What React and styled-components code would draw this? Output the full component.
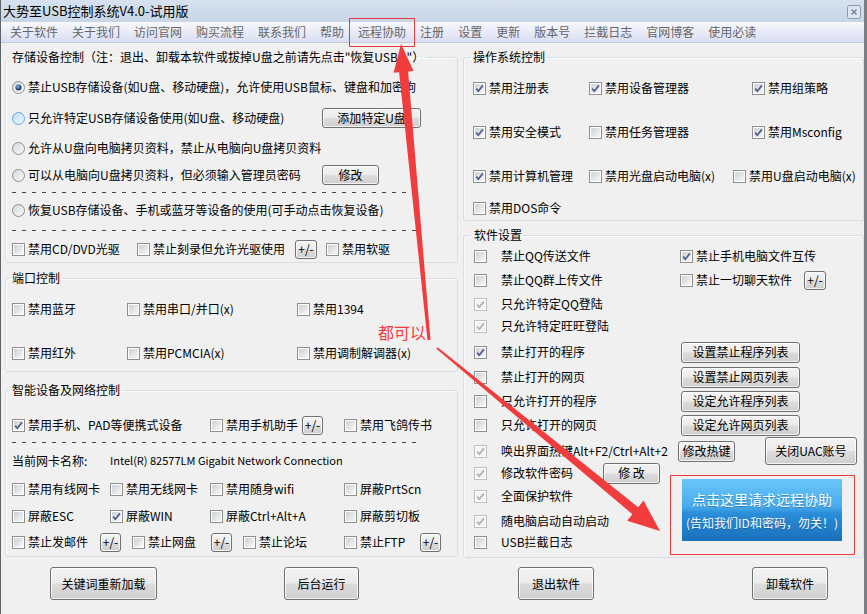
import React from "react";
import styled, { createGlobalStyle } from "styled-components";

// - - - - - - - - - - -
// page base
const GlobalStyle = createGlobalStyle`
  html, body {
    margin: 0;
    padding: 0;
    background: #f0f0f0;
  }
  body {
    font-family: "Noto Sans CJK SC", "Noto Sans", sans-serif;
    font-size: 12px;
    color: #000;
  }
  * {
    box-sizing: border-box;
  }
`;

// - - - - - - - - - - -
// window frame
const Window = styled.div`
  position: relative;
  width: 867px;
  height: 614px;
  display: flex;
  flex-direction: column;
  background: #f0f0f0;
  border-left: 1px solid #5f646b;
  border-right: 3px solid #7a7f86;
  overflow: hidden;
`;

const TitleBar = styled.div`
  display: flex;
  align-items: center;
  height: 22px;
  padding-left: 2px;
  background: linear-gradient(#d6e2ef, #c7d5e5);
  font-size: 13px;
  line-height: 22px;
`;

const CloseBox = styled.svg`
  display: block;
  align-self: flex-start;
  margin: 5px 3px 0 auto;
`;

const MenuBar = styled.div`
  display: flex;
  height: 21px;
  padding-left: 2px;
  background: linear-gradient(#f8f9fd, #d9def2);
  border-bottom: 1px solid #c6cad6;
`;

const MenuItem = styled.span`
  padding: 0 7px;
  line-height: 20px;
  font-size: 12px;
  color: #666;
`;

// - - - - - - - - - - -
// two columns of group boxes
const Main = styled.div`
  display: grid;
  grid-template-columns: 453px 401px;
  column-gap: 5px;
  padding: 6px 0 0 4px;
`;

const Column = styled.div`
  display: flex;
  flex-direction: column;
`;

const Group = styled.fieldset`
  min-width: 0;
  margin: ${(p) => p.$mt || 0}px 0 0 0;
  padding: 0 0 0 ${(p) => p.$pl || 6}px;
  border: 1px solid #d5dfe5;
  border-radius: 3px;
  box-shadow: inset 1px 1px 0 #fbfbfb;
`;

const Legend = styled.legend`
  margin-left: -2px;
  padding: 0 2px;
  font-size: 12px;
  line-height: 16px;
  white-space: nowrap;
`;

const Rows = styled.div`
  display: flex;
  flex-direction: column;
  gap: ${(p) => p.$gap || 0}px;
  padding: ${(p) => p.$pt || 0}px 0 ${(p) => p.$pb || 0}px 0;
`;

const Row = styled.div`
  display: grid;
  grid-template-columns: ${(p) => p.$cols || "auto"};
  align-items: center;
  height: ${(p) => p.$h}px;
`;

const DashLine = styled.div`
  width: 410px;
  height: 1px;
  background: repeating-linear-gradient(to right, #444 0 4px, transparent 4px 10px);
`;

const Opt = styled.label`
  display: inline-flex;
  align-items: center;
  gap: ${(p) => (p.$gap === undefined ? 3 : p.$gap)}px;
  white-space: nowrap;
  line-height: 16px;
`;

const Inline = styled.div`
  display: flex;
  align-items: center;
  gap: ${(p) => p.$gap || 0}px;
`;

const NicName = styled.span`
  font-size: 11px;
  white-space: nowrap;
`;

// - - - - - - - - - - -
// software settings grid
const SoftGrid = styled.div`
  display: grid;
  grid-template-columns: 129px 77px 85px 1fr;
  grid-template-rows: 26px 22px 26px 18px 34px 16px 32px 16px 36px 8px 38px 12px 30px;
  align-items: center;
`;

const Cell = styled.div`
  grid-row: ${(p) => p.$r};
  grid-column: ${(p) => p.$c};
  display: flex;
  align-items: center;
  margin-left: ${(p) => p.$ml || 0}px;
  gap: ${(p) => p.$gap || 0}px;
`;

// - - - - - - - - - - -
// buttons
const WinButton = styled.button`
  width: ${(p) => p.$w}px;
  height: ${(p) => p.$h || 21}px;
  margin-left: ${(p) => p.$ml || 0}px;
  padding: 0;
  font-family: inherit;
  font-size: 12px;
  line-height: 14px;
  color: #000;
  border: 1px solid #707070;
  border-radius: 3px;
  background: linear-gradient(#f3f3f3 0%, #ebebeb 48%, #dcdcdc 52%, #cfcfcf 100%);
  box-shadow: inset 0 0 0 1px rgba(255, 255, 255, 0.75);
  justify-self: start;
  white-space: nowrap;
  flex-shrink: 0;
`;

const BlueButton = styled.button`
  grid-row: 11 / span 3;
  grid-column: 3 / 5;
  align-self: start;
  margin: 2px 0 0 2px;
  width: 160px;
  height: 62px;
  display: flex;
  flex-direction: column;
  align-items: center;
  justify-content: center;
  gap: 6px;
  padding: 0;
  border: none;
  font-family: inherit;
  color: #fff;
  text-shadow: 0 1px 1px rgba(0, 40, 90, 0.35);
  background: linear-gradient(#6ac6f8 0%, #48abec 45%, #2a8ed9 55%, #1a70bb 100%);
`;

const BlueLine = styled.span`
  font-size: ${(p) => p.$size}px;
  line-height: ${(p) => p.$lh}px;
  white-space: nowrap;
`;

const BottomBar = styled.div`
  flex: 1;
  display: flex;
  align-items: flex-start;
  padding: 9px 0 0 49px;
`;

// - - - - - - - - - - -
// annotation layer drawn over the window
const Overlay = styled.svg`
  position: absolute;
  left: -1px;
  top: 0;
  pointer-events: none;
`;

const Note = styled.span`
  position: absolute;
  left: 377px;
  top: 323px;
  font-size: 16px;
  line-height: 18px;
  color: #f23c3c;
  white-space: nowrap;
`;

const Glyph = styled.svg`
  display: block;
  flex-shrink: 0;
`;

// - - - - - - - - - - -
// checkbox and radio drawings
const Check = ({ on, off }) => (
  <Glyph width="13" height="13" viewBox="0 0 13 13">
    <rect x="0.5" y="0.5" width="12" height="12" fill="#fff" stroke={off ? "#bdbdbd" : "#8e8f8f"} />
    <rect x="2" y="2" width="9" height="9" fill={off ? "#f3f3f3" : "url(#cbg)"} />
    {on && (
      <path
        d="M3.2 6.6 L5.3 9.2 L9.9 3.4"
        fill="none"
        stroke={off ? "#b2b2b2" : "#4a5d8e"}
        strokeWidth="1.7"
      />
    )}
  </Glyph>
);

const Radio = ({ on, hot }) => (
  <Glyph width="13" height="13" viewBox="0 0 13 13">
    <circle cx="6.5" cy="6.5" r="6" fill={hot ? "url(#rhot)" : "url(#rbg)"} stroke={hot ? "#6ea4d6" : "#8e8f8f"} />
    {on && <circle cx="6.5" cy="6.5" r="3" fill="url(#rdot)" />}
  </Glyph>
);

const CheckOpt = ({ on, off, gap, children }) => (
  <Opt $gap={gap}>
    <Check on={on} off={off} />
    <span>{children}</span>
  </Opt>
);

const RadioOpt = ({ on, hot, children }) => (
  <Opt>
    <Radio on={on} hot={hot} />
    <span>{children}</span>
  </Opt>
);

const menus = ["关于软件", "关于我们", "访问官网", "购买流程", "联系我们", "帮助", "远程协助", "注册", "设置", "更新", "版本号", "拦截日志", "官网博客", "使用必读"];

export default function App() {
  return (
    <>
      <GlobalStyle />
      <svg width="0" height="0" style={{ position: "absolute" }}>
        <defs>
          <linearGradient id="cbg" x1="0" y1="0" x2="1" y2="1">
            <stop offset="0" stopColor="#cdd1d6" />
            <stop offset="1" stopColor="#f7f7f7" />
          </linearGradient>
          <linearGradient id="rbg" x1="0" y1="0" x2="1" y2="1">
            <stop offset="0" stopColor="#d4d6d9" />
            <stop offset="1" stopColor="#fbfbfb" />
          </linearGradient>
          <linearGradient id="rhot" x1="0" y1="0" x2="1" y2="1">
            <stop offset="0" stopColor="#b9def5" />
            <stop offset="1" stopColor="#eef8fe" />
          </linearGradient>
          <radialGradient id="rdot" cx="0.4" cy="0.35" r="0.7">
            <stop offset="0" stopColor="#8fb5e8" />
            <stop offset="0.6" stopColor="#2a4f8c" />
            <stop offset="1" stopColor="#15305e" />
          </radialGradient>
        </defs>
      </svg>
      <Window>
        <TitleBar>
          大势至USB控制系统V4.0-试用版
          <CloseBox width="14" height="14" viewBox="0 0 14 14">
            <rect x="0.5" y="0.5" width="13" height="13" rx="2" fill="#dde6ef" stroke="#8d99a8" />
            <path d="M4.5 4.5 L9.5 9.5 M9.5 4.5 L4.5 9.5" stroke="#6f7d8d" strokeWidth="1.3" />
          </CloseBox>
        </TitleBar>

        <MenuBar>
          {menus.map((m) => (
            <MenuItem key={m}>{m}</MenuItem>
          ))}
        </MenuBar>

        <Main>
          <Column>
            {/* 1. storage devices */}
            <Group>
              <Legend>存储设备控制（注：退出、卸载本软件或拔掉U盘之前请先点击"恢复USB..."）</Legend>
              <Rows $pt={7}>
                <Row $h={30}>
                  <RadioOpt on>禁止USB存储设备(如U盘、移动硬盘)，允许使用USB鼠标、键盘和加密狗</RadioOpt>
                </Row>
                <Row $h={32} $cols="310px auto">
                  <RadioOpt hot>只允许特定USB存储设备使用(如U盘、移动硬盘)</RadioOpt>
                  <WinButton $w={99} $h={20}>添加特定U盘</WinButton>
                </Row>
                <Row $h={28}>
                  <RadioOpt>允许从U盘向电脑拷贝资料，禁止从电脑向U盘拷贝资料</RadioOpt>
                </Row>
                <Row $h={26} $cols="310px auto">
                  <RadioOpt>可以从电脑向U盘拷贝资料，但必须输入管理员密码</RadioOpt>
                  <WinButton $w={57} $h={20}>修改</WinButton>
                </Row>
                <Row $h={8}>
                  <DashLine />
                </Row>
                <Row $h={28}>
                  <RadioOpt>恢复USB存储设备、手机或蓝牙等设备的使用(可手动点击恢复设备)</RadioOpt>
                </Row>
                <Row $h={12}>
                  <DashLine />
                </Row>
                <Row $h={26} $cols="125px 158px 31px auto">
                  <CheckOpt>禁用CD/DVD光驱</CheckOpt>
                  <CheckOpt>禁止刻录但允许光驱使用</CheckOpt>
                  <WinButton $w={22} $h={19}>+/-</WinButton>
                  <CheckOpt>禁用软驱</CheckOpt>
                </Row>
              </Rows>
            </Group>

            {/* 2. ports */}
            <Group $mt={7}>
              <Legend>端口控制</Legend>
              <Rows $pt={9} $gap={16} $pb={4}>
                <Row $h={28} $cols="115px 170px auto">
                  <CheckOpt>禁用蓝牙</CheckOpt>
                  <CheckOpt>禁用串口/并口(x)</CheckOpt>
                  <CheckOpt>禁用1394</CheckOpt>
                </Row>
                <Row $h={28} $cols="115px 170px auto">
                  <CheckOpt>禁用红外</CheckOpt>
                  <CheckOpt>禁用PCMCIA(x)</CheckOpt>
                  <CheckOpt>禁用调制解调器(x)</CheckOpt>
                </Row>
              </Rows>
            </Group>

            {/* 3. smart devices and network */}
            <Group $mt={10}>
              <Legend>智能设备及网络控制</Legend>
              <Rows $pt={13} $pb={1}>
                <Row $h={28} $cols="198px 92px 42px auto">
                  <CheckOpt on>禁用手机、PAD等便携式设备</CheckOpt>
                  <CheckOpt>禁用手机助手</CheckOpt>
                  <WinButton $w={21} $h={19}>+/-</WinButton>
                  <CheckOpt>禁用飞鸽传书</CheckOpt>
                </Row>
                <Row $h={6}>
                  <DashLine />
                </Row>
                <Row $h={30} $cols="98px auto">
                  <span>当前网卡名称:</span>
                  <NicName>Intel(R) 82577LM Gigabit Network Connection</NicName>
                </Row>
                <Row $h={28} $cols="98px 100px 134px auto">
                  <CheckOpt>禁用有线网卡</CheckOpt>
                  <CheckOpt>禁用无线网卡</CheckOpt>
                  <CheckOpt>禁用随身wifi</CheckOpt>
                  <CheckOpt>屏蔽PrtScn</CheckOpt>
                </Row>
                <Row $h={26} $cols="98px 100px 134px auto">
                  <CheckOpt>屏蔽ESC</CheckOpt>
                  <CheckOpt on>屏蔽WIN</CheckOpt>
                  <CheckOpt>屏蔽Ctrl+Alt+A</CheckOpt>
                  <CheckOpt>屏蔽剪切板</CheckOpt>
                </Row>
                <Row $h={26} $cols="88px 32px 79px 32px 101px 76px auto">
                  <CheckOpt>禁止发邮件</CheckOpt>
                  <WinButton $w={21} $h={19}>+/-</WinButton>
                  <CheckOpt>禁止网盘</CheckOpt>
                  <WinButton $w={21} $h={19}>+/-</WinButton>
                  <CheckOpt>禁止论坛</CheckOpt>
                  <CheckOpt>禁止FTP</CheckOpt>
                  <WinButton $w={21} $h={19}>+/-</WinButton>
                </Row>
              </Rows>
            </Group>
          </Column>

          <Column>
            {/* 4. operating system */}
            <Group $pl={9}>
              <Legend>操作系统控制</Legend>
              <Rows $pb={3}>
                <Row $h={46} $cols="116px 163px auto">
                  <CheckOpt on>禁用注册表</CheckOpt>
                  <CheckOpt on>禁用设备管理器</CheckOpt>
                  <CheckOpt on>禁用组策略</CheckOpt>
                </Row>
                <Row $h={42} $cols="116px 163px auto">
                  <CheckOpt on>禁用安全模式</CheckOpt>
                  <CheckOpt>禁用任务管理器</CheckOpt>
                  <CheckOpt on>禁用Msconfig</CheckOpt>
                </Row>
                <Row $h={46} $cols="116px 144px auto">
                  <CheckOpt on>禁用计算机管理</CheckOpt>
                  <CheckOpt>禁用光盘启动电脑(x)</CheckOpt>
                  <CheckOpt>禁用U盘启动电脑(x)</CheckOpt>
                </Row>
                <Row $h={18}>
                  <CheckOpt>禁用DOS命令</CheckOpt>
                </Row>
              </Rows>
            </Group>

            {/* 5. software settings */}
            <Group $mt={6} $pl={10}>
              <Legend>软件设置</Legend>
              <SoftGrid>
                <Cell $r={1} $c="1 / 3"><CheckOpt gap={14}>禁止QQ传送文件</CheckOpt></Cell>
                <Cell $r={1} $c="3 / 5"><CheckOpt on>禁止手机电脑文件互传</CheckOpt></Cell>

                <Cell $r={2} $c="1 / 3"><CheckOpt gap={14}>禁止QQ群上传文件</CheckOpt></Cell>
                <Cell $r={2} $c="3 / 5" $gap={12}>
                  <CheckOpt>禁止一切聊天软件</CheckOpt>
                  <WinButton $w={22} $h={19}>+/-</WinButton>
                </Cell>

                <Cell $r={3} $c="1 / 4"><CheckOpt on off gap={14}>只允许特定QQ登陆</CheckOpt></Cell>
                <Cell $r={4} $c="1 / 4"><CheckOpt on off gap={14}>只允许特定旺旺登陆</CheckOpt></Cell>

                <Cell $r={5} $c="1 / 3"><CheckOpt on gap={14}>禁止打开的程序</CheckOpt></Cell>
                <Cell $r={5} $c="3 / 5" $ml={1}><WinButton $w={119}>设置禁止程序列表</WinButton></Cell>

                <Cell $r={6} $c="1 / 3"><CheckOpt gap={14}>禁止打开的网页</CheckOpt></Cell>
                <Cell $r={6} $c="3 / 5" $ml={1}><WinButton $w={119}>设置禁止网页列表</WinButton></Cell>

                <Cell $r={7} $c="1 / 3"><CheckOpt gap={14}>只允许打开的程序</CheckOpt></Cell>
                <Cell $r={7} $c="3 / 5" $ml={1}><WinButton $w={119}>设定允许程序列表</WinButton></Cell>

                <Cell $r={8} $c="1 / 3"><CheckOpt gap={14}>只允许打开的网页</CheckOpt></Cell>
                <Cell $r={8} $c="3 / 5" $ml={1}><WinButton $w={119}>设定允许网页列表</WinButton></Cell>

                <Cell $r={9} $c="1 / 3"><CheckOpt on off gap={14}>唤出界面热键Alt+F2/Ctrl+Alt+2</CheckOpt></Cell>
                <Cell $r={9} $c="3" $ml={-2}><WinButton $w={57}>修改热键</WinButton></Cell>
                <Cell $r={9} $c="4"><WinButton $w={92} $h={28}>关闭UAC账号</WinButton></Cell>

                <Cell $r={10} $c="1"><CheckOpt on off gap={14}>修改软件密码</CheckOpt></Cell>
                <Cell $r={10} $c="2"><WinButton $w={57}>修 改</WinButton></Cell>

                <Cell $r={11} $c="1 / 3"><CheckOpt on off gap={14}>全面保护软件</CheckOpt></Cell>
                <BlueButton>
                  <BlueLine $size={14} $lh={20}>点击这里请求远程协助</BlueLine>
                  <BlueLine $size={12} $lh={16}>(告知我们ID和密码，勿关！)</BlueLine>
                </BlueButton>

                <Cell $r={12} $c="1 / 3"><CheckOpt on off gap={14}>随电脑启动自动启动</CheckOpt></Cell>
                <Cell $r={13} $c="1 / 3"><CheckOpt gap={14}>USB拦截日志</CheckOpt></Cell>
              </SoftGrid>
            </Group>
          </Column>
        </Main>

        <BottomBar>
          <WinButton $w={107} $h={33}>关键词重新加载</WinButton>
          <WinButton $w={75} $h={33} $ml={127}>后台运行</WinButton>
          <WinButton $w={76} $h={33} $ml={159}>退出软件</WinButton>
          <WinButton $w={76} $h={33} $ml={158}>卸载软件</WinButton>
        </BottomBar>

        {/* red annotations */}
        <Overlay width="867" height="614" viewBox="0 0 867 614">
          <rect x="349.5" y="18.5" width="65" height="28" fill="none" stroke="#e83a3a" />
          <rect x="670.5" y="475.5" width="184" height="79" fill="none" stroke="#e83a3a" />
          <polygon
            fill="#f03c3c"
            points="430.5,339.9 408.1,71.5 413.6,71.0 401,44 393.6,72.8 399.1,72.3 427.5,340.1"
          />
          <polygon
            fill="#f03c3c"
            points="436.4,348.8 632.4,514.2 627.1,520.8 660,531 643.5,500.6 638.2,507.2 437.6,347.2"
          />
        </Overlay>
        <Note>都可以</Note>
      </Window>
    </>
  );
}
